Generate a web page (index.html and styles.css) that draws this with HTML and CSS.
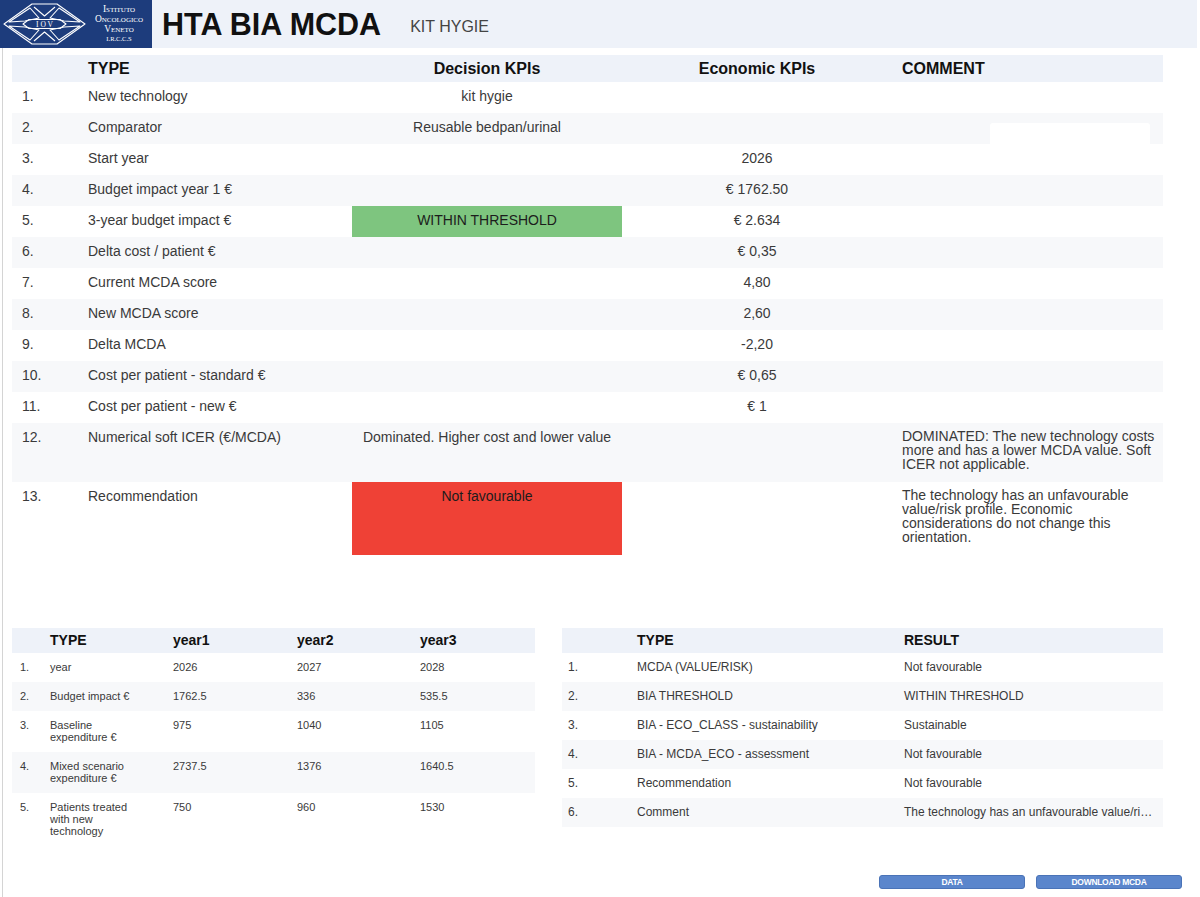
FILE: index.html
```html
<!DOCTYPE html>
<html lang="en">
<head>
<meta charset="utf-8">
<title>HTA BIA MCDA</title>
<link rel="stylesheet" href="styles.css">
</head>
<body>
<header class="topbar">
  <div class="logo">
    <svg class="logo-mark" viewBox="0 0 88 48" width="88" height="48" fill="none" stroke="#fff" stroke-width="1.1" stroke-linejoin="round">
      <polygon points="4,24 32,4 57,4 85,24 57,44 32,44"/>
      <polygon points="9,22 30,8 39,18 25,21"/>
      <polygon points="80,22 59,8 50,18 64,21"/>
      <polygon points="9,26 30,40 39,30 25,27"/>
      <polygon points="80,26 59,40 50,30 64,27"/>
      <polyline points="34,7 44.5,16 55,7"/>
      <polyline points="34,41 44.5,32 55,41"/>
      <polygon points="23,24 29,19.5 60,19.5 66,24 60,28.5 29,28.5"/>
      <text x="44.5" y="26.6" text-anchor="middle" fill="#fff" stroke="none" font-family="Liberation Serif, serif" font-size="7.5">I O V</text>
    </svg>
    <div class="logo-text">
      <span>Istituto</span>
      <span>Oncologico</span>
      <span>Veneto</span>
      <span class="irccs">I.R.C.C.S</span>
    </div>
  </div>
  <h1 class="title">HTA BIA MCDA</h1>
  <span class="subtitle">KIT HYGIE</span>
</header>

<main class="page">
  <section class="kpi">
    <div class="krow khead"><div></div><div>TYPE</div><div class="c">Decision KPIs</div><div class="c">Economic KPIs</div><div>COMMENT</div></div>
    <div class="krow"><div>1.</div><div>New technology</div><div class="c">kit hygie</div><div class="c"></div><div class="cm"></div></div>
    <div class="krow"><div>2.</div><div>Comparator</div><div class="c">Reusable bedpan/urinal</div><div class="c"></div><div class="cm has-blank"><div class="blank"></div></div></div>
    <div class="krow"><div>3.</div><div>Start year</div><div class="c"></div><div class="c">2026</div><div class="cm"></div></div>
    <div class="krow"><div>4.</div><div>Budget impact year 1 €</div><div class="c"></div><div class="c">€ 1762.50</div><div class="cm"></div></div>
    <div class="krow"><div>5.</div><div>3-year budget impact €</div><div class="c ok">WITHIN THRESHOLD</div><div class="c">€ 2.634</div><div class="cm"></div></div>
    <div class="krow"><div>6.</div><div>Delta cost / patient €</div><div class="c"></div><div class="c">€ 0,35</div><div class="cm"></div></div>
    <div class="krow"><div>7.</div><div>Current MCDA score</div><div class="c"></div><div class="c">4,80</div><div class="cm"></div></div>
    <div class="krow"><div>8.</div><div>New MCDA score</div><div class="c"></div><div class="c">2,60</div><div class="cm"></div></div>
    <div class="krow"><div>9.</div><div>Delta MCDA</div><div class="c"></div><div class="c">-2,20</div><div class="cm"></div></div>
    <div class="krow"><div>10.</div><div>Cost per patient - standard €</div><div class="c"></div><div class="c">€ 0,65</div><div class="cm"></div></div>
    <div class="krow"><div>11.</div><div>Cost per patient - new €</div><div class="c"></div><div class="c">€ 1</div><div class="cm"></div></div>
    <div class="krow"><div>12.</div><div>Numerical soft ICER (€/MCDA)</div><div class="c">Dominated. Higher cost and lower value</div><div class="c"></div><div class="cm">DOMINATED: The new technology costs more and has a lower MCDA value. Soft ICER not applicable.</div></div>
    <div class="krow"><div>13.</div><div>Recommendation</div><div class="c bad">Not favourable</div><div class="c"></div><div class="cm">The technology has an unfavourable value/risk profile. Economic considerations do not change this orientation.</div></div>
  </section>

  <div class="bottom">
    <section class="years">
      <div class="brow bhead"><div></div><div>TYPE</div><div>year1</div><div>year2</div><div>year3</div></div>
      <div class="brow"><div>1.</div><div>year</div><div>2026</div><div>2027</div><div>2028</div></div>
      <div class="brow"><div>2.</div><div>Budget impact €</div><div>1762.5</div><div>336</div><div>535.5</div></div>
      <div class="brow"><div>3.</div><div>Baseline expenditure €</div><div>975</div><div>1040</div><div>1105</div></div>
      <div class="brow"><div>4.</div><div>Mixed scenario expenditure €</div><div>2737.5</div><div>1376</div><div>1640.5</div></div>
      <div class="brow"><div>5.</div><div>Patients treated with new technology</div><div>750</div><div>960</div><div>1530</div></div>
    </section>
    <section class="results">
      <div class="brow bhead"><div></div><div>TYPE</div><div>RESULT</div></div>
      <div class="brow"><div>1.</div><div>MCDA (VALUE/RISK)</div><div>Not favourable</div></div>
      <div class="brow"><div>2.</div><div>BIA THRESHOLD</div><div>WITHIN THRESHOLD</div></div>
      <div class="brow"><div>3.</div><div>BIA - ECO_CLASS - sustainability</div><div>Sustainable</div></div>
      <div class="brow"><div>4.</div><div>BIA - MCDA_ECO - assessment</div><div>Not favourable</div></div>
      <div class="brow"><div>5.</div><div>Recommendation</div><div>Not favourable</div></div>
      <div class="brow"><div>6.</div><div>Comment</div><div class="trunc">The technology has an unfavourable value/ri…</div></div>
    </section>
  </div>

  <div class="actions">
    <button class="btn" type="button">DATA</button>
    <button class="btn" type="button">DOWNLOAD MCDA</button>
  </div>
</main>
</body>
</html>
```

FILE: styles.css
```css
* {
  box-sizing: border-box;
  margin: 0;
  padding: 0;
}

body {
  font-family: "Liberation Sans", Arial, sans-serif;
  color: #3a3a3a;
  background: #fff;
  width: 1200px;
}

/* ---------- Header ---------- */
.topbar {
  height: 48px;
  margin-right: 3px;
  background: #eef2f9;
  display: flex;
  align-items: center;
}

.logo {
  width: 152px;
  height: 48px;
  flex: none;
  background: #1d3c7c;
  display: flex;
  align-items: center;
}

.logo-mark {
  display: block;
  flex: none;
}

.logo-text {
  width: 60px;
  margin-left: 1px;
  display: flex;
  flex-direction: column;
  align-items: center;
  color: #fff;
  font-family: "Liberation Serif", "DejaVu Serif", serif;
  font-variant: small-caps;
  font-size: 9.5px;
  line-height: 10px;
}

.logo-text .irccs {
  font-size: 6.5px;
  line-height: 10px;
}

.title {
  margin-left: 10px;
  font-size: 30.5px;
  line-height: 1;
  font-weight: bold;
  color: #111;
}

.subtitle {
  margin-left: 29px;
  margin-top: 6px;
  font-size: 16px;
  color: #444;
}

/* ---------- Page ---------- */
.page {
  margin-left: 2px;
  border-left: 1px solid #d4d4d4;
  padding-left: 9px;
  min-height: 849px;
  display: flex;
  flex-direction: column;
}

/* ---------- KPI table ---------- */
.kpi {
  width: 1151px;
  margin-top: 7px;
  font-size: 14px;
}

.krow {
  display: grid;
  grid-template-columns: 76px 264px 270px 270px 271px;
}

.krow > div {
  padding: 6px 10px 8px;
  line-height: 17px;
}

.krow > div:nth-child(2) {
  padding-left: 0;
}

.kpi .krow:nth-child(2n+3) {
  background: #f7f8fa;
}

.khead {
  background: #eef2f9;
  font-size: 16px;
  font-weight: bold;
  color: #111;
}

.khead > div {
  padding-top: 4px;
  padding-bottom: 4px;
  line-height: 19px;
}

.c {
  text-align: center;
}

.krow > .cm {
  line-height: 14px;
  padding: 6px 6px 11px 10px;
}

.krow > .has-blank {
  padding-bottom: 0;
}

.blank {
  margin: 4px 0 0 88px;
  width: 160px;
  height: 21px;
  background: #fff;
  border-radius: 3px 3px 0 0;
}

.ok {
  background: #7ec57f;
  color: #1c1c1c;
}

.bad {
  background: #ef4136;
  color: #1c1c1c;
}

/* ---------- Bottom tables ---------- */
.bottom {
  display: flex;
  gap: 27px;
  margin-top: 73px;
  font-size: 12px;
}

.years {
  width: 523px;
  font-size: 11px;
}

.results {
  width: 601px;
}

.brow {
  display: grid;
}

.years .brow {
  grid-template-columns: 38px 123px 124px 123px 115px;
}

.results .brow {
  grid-template-columns: 75px 267px 259px;
}

.brow > div {
  padding: 8px 0;
  line-height: 13px;
}

.years .brow > div {
  padding: 8px 0 9px;
  line-height: 12px;
}

.brow:nth-child(2n+3) {
  background: #f7f8fa;
}

.bhead {
  background: #eef2f9;
  font-size: 14px;
  font-weight: bold;
  color: #111;
}

.brow.bhead > div,
.years .brow.bhead > div {
  padding-top: 5px;
  padding-bottom: 5px;
  line-height: 15px;
}

.years .brow > div:first-child {
  padding-left: 8px;
}

.results .brow > div:first-child {
  padding-left: 6px;
}

.years .brow > div:nth-child(2) {
  padding-right: 30px;
}

.trunc {
  white-space: nowrap;
}

/* ---------- Actions ---------- */
.actions {
  margin-top: auto;
  display: flex;
  justify-content: flex-end;
  gap: 11px;
  padding-right: 18px;
  padding-bottom: 8px;
}

.btn {
  width: 146px;
  height: 14px;
  background: #5b86cc;
  border: 1px solid #4a73b7;
  border-radius: 3px;
  color: #fff;
  font-family: "Liberation Sans", Arial, sans-serif;
  font-size: 8.5px;
  font-weight: bold;
  letter-spacing: -0.3px;
  line-height: 12px;
  text-align: center;
}
```
